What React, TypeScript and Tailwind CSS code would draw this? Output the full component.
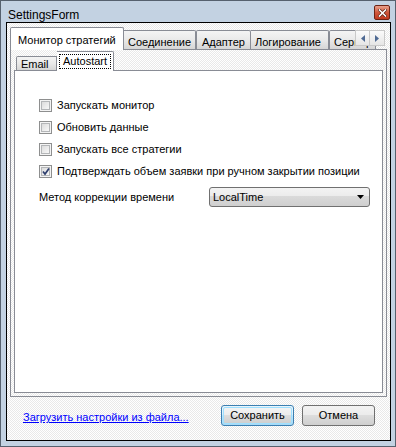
import React from "react";

function CheckBox({ checked }: { checked?: boolean }) {
  return (
    <div className="w-[13px] h-[13px] border border-[#8e8f8f] bg-[#f4f4f4] p-[1px] shrink-0">
      <div className="w-full h-full border border-[#b4b6b8] bg-gradient-to-br from-[#dcdcdc] to-[#f8f8f8] relative">
        {checked && (
          <svg width="11" height="11" viewBox="0 0 11 11" className="absolute -left-[2px] -top-[2px]">
            <path d="M3 5.5 L5 8 L9 2.5" fill="none" stroke="#2e3f6e" strokeWidth="1.7" />
          </svg>
        )}
      </div>
    </div>
  );
}

function Row({ label, checked }: { label: string; checked?: boolean }) {
  return (
    <div className="h-[22px] flex items-center">
      <CheckBox checked={checked} />
      <span className="ml-[5px] leading-[13px]">{label}</span>
    </div>
  );
}

const dither =
  "bg-[repeating-conic-gradient(#ffffff_0_25%,#e9e9e9_0_50%)] bg-[length:2px_2px]";

export default function App() {
  return (
    <div className="w-[396px] h-[447px] border border-[#56616e] bg-[#c3d2e2] flex flex-col text-[11px] text-black font-['Liberation_Sans',Arial,sans-serif] select-none">
      {/* Title bar */}
      <div className="h-[21px] flex items-start justify-between pl-[7px] pr-[5px]">
        <span className="text-[12px] leading-[14px] mt-[7px]">SettingsForm</span>
        <div className="mt-[4px] w-[16px] h-[15px] rounded-[2px] border border-[#6e2415] bg-gradient-to-b from-[#e8a08c] via-[#d0583c] to-[#c0391f] flex items-center justify-center">
          <svg width="9" height="8" viewBox="0 0 9 8">
            <path d="M1.5 1 L7.5 7 M7.5 1 L1.5 7" stroke="#5a2012" strokeWidth="3" strokeLinecap="square" />
            <path d="M1.5 1 L7.5 7 M7.5 1 L1.5 7" stroke="#ffffff" strokeWidth="1.6" strokeLinecap="square" />
          </svg>
        </div>
      </div>

      {/* Client area */}
      <div className={`ml-[5px] mr-[4px] mb-[5px] h-[419px] border border-black flex flex-col ${dither}`}>
        {/* Outer tab control */}
        <div className="mx-[3px] mt-[4px] h-[370px] flex flex-col">
          <div className="relative h-[22px] flex items-end">
            <div className="relative z-10 -mb-px h-[23px] w-[114px] border border-b-0 border-[#898c95] bg-white flex items-start pl-[7px] pt-[4px] rounded-t-[2px]">
              Монитор стратегий
            </div>
            <div className="h-[19px] w-[72px] border border-b-0 border-l-0 border-[#898c95] bg-gradient-to-b from-[#f4f4f4] via-[#e9e9e9] to-[#d6d6d6] pl-[4px] pt-[3px] rounded-tr-[2px]">
              Соединение
            </div>
            <div className="h-[19px] w-[55px] border border-b-0 border-[#898c95] bg-gradient-to-b from-[#f4f4f4] via-[#e9e9e9] to-[#d6d6d6] pl-[5px] pt-[3px] rounded-t-[2px]">
              Адаптер
            </div>
            <div className="h-[19px] w-[78px] border border-b-0 border-l-0 border-[#898c95] bg-gradient-to-b from-[#f4f4f4] via-[#e9e9e9] to-[#d6d6d6] pl-[4px] pt-[3px] rounded-tr-[2px]">
              Логирование
            </div>
            <div className="h-[19px] w-[47px] overflow-hidden whitespace-nowrap border border-b-0 border-[#898c95] bg-gradient-to-b from-[#f4f4f4] via-[#e9e9e9] to-[#d6d6d6] pl-[4px] pt-[3px] rounded-t-[2px]">
              Сервер
            </div>
            {/* scroll buttons */}
            <div className="absolute left-[345px] top-[3px] flex z-20">
              <div className="w-[15px] h-[16px] border border-[#c9c9c9] bg-gradient-to-b from-[#fbfbfb] to-[#e6e6e6] flex items-center justify-center">
                <svg width="4" height="7" viewBox="0 0 4 7">
                  <path d="M4 0 L0 3.5 L4 7 Z" fill="#4f6a93" />
                </svg>
              </div>
              <div className="w-[15px] h-[16px] border border-l-0 border-[#c9c9c9] bg-gradient-to-b from-[#fbfbfb] to-[#e6e6e6] flex items-center justify-center">
                <svg width="4" height="7" viewBox="0 0 4 7">
                  <path d="M0 0 L4 3.5 L0 7 Z" fill="#4f6a93" />
                </svg>
              </div>
            </div>
          </div>

          {/* Outer panel */}
          <div className={`flex-1 border border-[#898c95] px-[3px] pt-[1px] pb-[3px] flex flex-col ${dither}`}>
            {/* Inner tab header */}
            <div className="h-[19px] flex items-end pl-[2px]">
              <div className="h-[14px] w-[41px] border border-b-0 border-[#898c95] bg-gradient-to-b from-[#f4f4f4] via-[#e9e9e9] to-[#d6d6d6] pl-[4px] pt-[1px] leading-[12px] rounded-tl-[2px]">
                Email
              </div>
              <div className="relative z-10 -mb-px h-[20px] w-[57px] border border-b-0 border-l-0 border-[#898c95] bg-white pl-[2px] pt-[2px] rounded-tr-[2px]">
                <div className="w-[52px] h-[15px] border border-dotted border-black pl-[3px] leading-[13px]">
                  Autostart
                </div>
              </div>
            </div>
            {/* Inner panel */}
            <div className="flex-1 border border-[#898c95] bg-white pl-[24px] pt-[23px] flex flex-col">
              <Row label="Запускать монитор" />
              <Row label="Обновить данные" />
              <Row label="Запускать все стратегии" />
              <Row label="Подтверждать объем заявки при ручном закрытии позиции" checked />
              <div className="mt-[5px] h-[20px] flex items-center">
                <span className="w-[170px]">Метод коррекции времени</span>
                <div className="w-[161px] h-[20px] rounded-[3px] border border-[#707070] bg-[linear-gradient(#f3f3f3_0%,#ececec_42%,#dadada_45%,#cfcfcf_100%)] flex items-center justify-between pl-[3px] pr-[5px]">
                  <span>LocalTime</span>
                  <svg width="7" height="4" viewBox="0 0 7 4">
                    <path d="M0 0 L7 0 L3.5 4 Z" fill="#000" />
                  </svg>
                </div>
              </div>
            </div>
          </div>
        </div>

        {/* Bottom row */}
        <div className="pt-[8px] pl-[16px] pr-[15px] flex items-start">
          <span className="mt-[4px] text-[#0000ff] underline">Загрузить настройки из файла...</span>
          <div className="ml-auto flex gap-[8px]">
            <div className="w-[73px] h-[21px] rounded-[3px] border border-[#3c7fb1] bg-[linear-gradient(#eaf6fd_0%,#d9f0fc_45%,#bee6fd_50%,#a7d9f5_100%)] p-[1px]">
              <div className="w-full h-full rounded-[2px] border border-[#9fe0ff] bg-[linear-gradient(#f3f3f3_0%,#ececec_45%,#dddddd_50%,#cfcfcf_100%)] flex items-center justify-center">
                Сохранить
              </div>
            </div>
            <div className="w-[73px] h-[21px] rounded-[3px] border border-[#707070] bg-[linear-gradient(#f3f3f3_0%,#ececec_45%,#dddddd_50%,#cfcfcf_100%)] flex items-center justify-center">
              Отмена
            </div>
          </div>
        </div>
      </div>
    </div>
  );
}
